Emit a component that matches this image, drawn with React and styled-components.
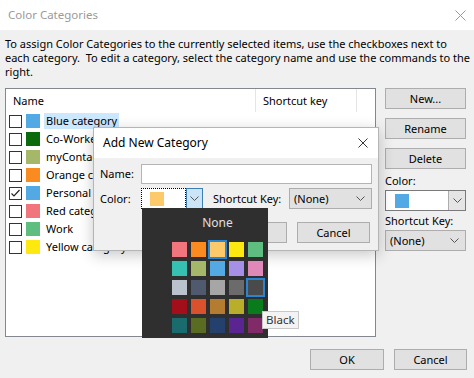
import React from 'react';
import styled, { createGlobalStyle } from 'styled-components';

const GlobalStyle = createGlobalStyle`
	body {
		margin: 0;
		font-family: 'Noto Sans', 'Liberation Sans', sans-serif;
		font-size: 11px;
		line-height: 14px;
		color: #000;
	}
`;

const categories = [
	{ name: 'Blue category', color: '#52a9e4', selected: true },
	{ name: 'Co-Worker', color: '#0b6a0b' },
	{ name: 'myContacts', color: '#a5b86a' },
	{ name: 'Orange category', color: '#f98b20' },
	{ name: 'Personal', color: '#52a9e4', checked: true },
	{ name: 'Red category', color: '#f0757d' },
	{ name: 'Work', color: '#5dbe7f' },
	{ name: 'Yellow category', color: '#fde910' },
];

const palette = [
	['#f0757d', '#f98b20', '#fcc96b', '#fde910', '#5dbe7f'],
	['#35c0b1', '#a5b86a', '#52a9e4', '#a68fe6', '#e088b7'],
	['#bac3cd', '#505a6f', '#a6a6a6', '#6b6b6b', '#4a4a4a'],
	['#a20f1b', '#d9522b', '#b47c30', '#b9ae2a', '#0a7b1c'],
	['#1a6b6e', '#5a6b22', '#24416e', '#5b2591', '#802b67'],
];

const Chevron = () => (
	<svg width='9' height='5' viewBox='0 0 9 5'>
		<polyline points='0.5,0.5 4.5,4.5 8.5,0.5' fill='none' stroke='#555' strokeWidth='1' />
	</svg>
);

const CloseIcon = ({ size = 11, color = '#999' }) => (
	<svg width={size} height={size} viewBox='0 0 11 11'>
		<path d='M0.5 0.5 L10.5 10.5 M10.5 0.5 L0.5 10.5' stroke={color} strokeWidth='1' />
	</svg>
);

const App = () => {
	return (
		<>
			<GlobalStyle />
			<Window>
				<TitleBar>
					<span>Color Categories</span>
					<CloseIcon />
				</TitleBar>
				<Intro>
					To assign Color Categories to the currently selected items, use the checkboxes next to
					<br />
					each category.&nbsp; To edit a category, select the category name and use the commands to the
					<br />
					right.
				</Intro>
				<Main>
					<ListBox>
						<ListHeader>
							<HeaderCell>Name</HeaderCell>
							<HeaderCell>Shortcut key</HeaderCell>
							<HeaderCell />
						</ListHeader>
						{categories.map((cat, idx) => (
							<Row key={idx}>
								<CheckBox>
									{cat.checked && (
										<svg width='11' height='11' viewBox='0 0 11 11'>
											<polyline points='1.5,5.5 4,8 9.5,2' fill='none' stroke='#222' strokeWidth='1.2' />
										</svg>
									)}
								</CheckBox>
								<Swatch $color={cat.color} />
								<RowLabel $selected={cat.selected}>{cat.name}</RowLabel>
							</Row>
						))}
					</ListBox>
					<Side>
						<Button>New...</Button>
						<Button>Rename</Button>
						<Button>Delete</Button>
						<SideLabel>Color:</SideLabel>
						<ColorSelect>
							<ColorField>
								<Swatch $color='#52a9e4' />
							</ColorField>
							<ArrowPart>
								<Chevron />
							</ArrowPart>
						</ColorSelect>
						<SideLabel>Shortcut Key:</SideLabel>
						<DropButton>
							<span>(None)</span>
							<Chevron />
						</DropButton>
					</Side>
				</Main>
				<Footer>
					<Button $w={74}>OK</Button>
					<Button $w={73}>Cancel</Button>
				</Footer>

				{/* --- add new category dialog --- */}
				<SubDialog>
					<SubTitle>
						<span>Add New Category</span>
						<CloseIcon size={10} color='#222' />
					</SubTitle>
					<SubBody>
						<FormRow>
							<FieldLabel>Name:</FieldLabel>
							<TextInput />
						</FormRow>
						<FormRow>
							<FieldLabel>Color:</FieldLabel>
							<ColorPicker>
								<FocusField>
									<Swatch $color='#fcc96b' />
								</FocusField>
								<ActiveArrow>
									<Chevron />
								</ActiveArrow>
								<Popup>
									<NoneLabel>None</NoneLabel>
									<Grid>
										{palette.flat().map((c, idx) => (
											<Cell key={idx} $color={c} $active={idx === 2 || idx === 14} />
										))}
									</Grid>
									<Tooltip>Black</Tooltip>
								</Popup>
							</ColorPicker>
							<KeyLabel>Shortcut Key:</KeyLabel>
							<DropButton $w={83}>
								<span>(None)</span>
								<Chevron />
							</DropButton>
						</FormRow>
						<ButtonRow>
							<Button $w={73}>OK</Button>
							<Button $w={73}>Cancel</Button>
						</ButtonRow>
					</SubBody>
				</SubDialog>
			</Window>
		</>
	);
};

const Window = styled.div`
	position: relative;
	width: 474px;
	height: 378px;
	background: #f0f0f0;
	overflow: hidden;
`;

const TitleBar = styled.div`
	height: 30px;
	background: #fff;
	display: flex;
	align-items: center;
	justify-content: space-between;
	padding: 0 8px 0 8px;
	color: #9a9a9a;
	font-size: 11.5px;
	box-sizing: border-box;
`;

const Intro = styled.div`
	padding: 7px 5px 0;
	line-height: 14px;
	white-space: nowrap;
`;

const Main = styled.div`
	display: flex;
	gap: 9px;
	padding: 0 7px 0 5px;
	margin-top: 9px;
`;

const ListBox = styled.div`
	width: 371px;
	height: 249px;
	box-sizing: border-box;
	border: 1px solid #828790;
	background: #fff;
`;

const ListHeader = styled.div`
	display: grid;
	grid-template-columns: 250px 101px 1fr;
	height: 23px;
`;

const HeaderCell = styled.div`
	display: flex;
	align-items: center;
	padding-left: 7px;
	border-right: 1px solid #e5e5e5;
	&:last-child {
		border-right: none;
	}
`;

const Row = styled.div`
	display: flex;
	align-items: center;
	height: 18px;
	padding-left: 3px;
`;

const CheckBox = styled.div`
	width: 13px;
	height: 13px;
	box-sizing: border-box;
	border: 1px solid #333;
	background: #fff;
	display: flex;
	align-items: center;
	justify-content: center;
	margin-right: 4px;
`;

const Swatch = styled.div`
	width: 14px;
	height: 14px;
	background: ${p => p.$color};
`;

const RowLabel = styled.div`
	margin-left: 4px;
	padding: 0 2px;
	line-height: 16px;
	white-space: nowrap;
	background: ${p => (p.$selected ? '#cce8ff' : 'transparent')};
`;

const Side = styled.div`
	width: 81px;
	display: flex;
	flex-direction: column;
`;

const Button = styled.div`
	width: ${p => (p.$w ? `${p.$w}px` : '100%')};
	height: 21px;
	box-sizing: border-box;
	border: 1px solid #adadad;
	background: #e1e1e1;
	display: flex;
	align-items: center;
	justify-content: center;
	${Side} > & {
		margin-bottom: 9px;
	}
	${Side} > &:nth-of-type(3) {
		margin-bottom: 4px;
	}
`;

const SideLabel = styled.div`
	line-height: 16px;
	margin-bottom: 1px;
	& + div + & {
		margin-top: 2px;
	}
`;

const ColorSelect = styled.div`
	display: flex;
	height: 21px;
	box-sizing: border-box;
	border: 1px solid #7a7a7a;
	background: #fff;
`;

const ColorField = styled.div`
	flex: 1;
	display: flex;
	align-items: center;
	padding-left: 9px;
`;

const ArrowPart = styled.div`
	width: 16px;
	display: flex;
	align-items: center;
	justify-content: center;
	background: #e5e5e5;
	border-left: 1px solid #adadad;
`;

const DropButton = styled.div`
	width: ${p => (p.$w ? `${p.$w}px` : '100%')};
	height: 21px;
	box-sizing: border-box;
	border: 1px solid #adadad;
	background: #e1e1e1;
	display: flex;
	align-items: center;
	justify-content: space-between;
	padding: 0 6px 0 4px;
`;

const Footer = styled.div`
	display: flex;
	justify-content: flex-end;
	gap: 10px;
	padding-right: 7px;
	margin-top: 12px;
`;

const SubDialog = styled.div`
	position: absolute;
	left: 93px;
	top: 127px;
	width: 286px;
	height: 124px;
	box-sizing: border-box;
	border: 1px solid #b5b5b5;
	background: #f0f0f0;
	box-shadow: 0 4px 14px rgba(0, 0, 0, 0.22);
`;

const SubTitle = styled.div`
	height: 30px;
	background: #fff;
	display: flex;
	align-items: center;
	justify-content: space-between;
	padding: 0 10px 0 9px;
	font-size: 12px;
`;

const SubBody = styled.div`
	padding: 6px 6px 0 6px;
`;

const FormRow = styled.div`
	display: flex;
	align-items: center;
	height: 20px;
	& + & {
		margin-top: 4px;
		height: 21px;
	}
`;

const FieldLabel = styled.div`
	width: 41px;
`;

const TextInput = styled.div`
	width: 231px;
	height: 20px;
	box-sizing: border-box;
	border: 1px solid #b4b4b4;
	background: #fff;
`;

const ColorPicker = styled.div`
	position: relative;
	display: flex;
	height: 21px;
`;

const FocusField = styled.div`
	width: 45px;
	box-sizing: border-box;
	border: 1px dotted #000;
	background: #fff;
	display: flex;
	align-items: center;
	padding-left: 8px;
`;

const ActiveArrow = styled.div`
	width: 17px;
	box-sizing: border-box;
	border: 1px solid #3c7fb1;
	background: #cce4f7;
	display: flex;
	align-items: center;
	justify-content: center;
`;

const KeyLabel = styled.div`
	margin: 0 0 0 10px;
	width: 76px;
	white-space: nowrap;
`;

const Popup = styled.div`
	position: absolute;
	left: 1px;
	top: 20px;
	width: 126px;
	height: 130px;
	box-sizing: border-box;
	background: #2f2f2f;
	padding: 8px 5px 0 30px;
	z-index: 2;
`;

const NoneLabel = styled.div`
	text-align: center;
	color: #e0e0e0;
	line-height: 14px;
	font-size: 12px;
`;

const Grid = styled.div`
	display: grid;
	grid-template-columns: repeat(5, 15px);
	grid-auto-rows: 15px;
	gap: 4px;
	margin-top: 12px;
`;

const Cell = styled.div`
	background: ${p => p.$color};
	outline: ${p => (p.$active ? '2px solid #2a84d2' : 'none')};
`;

const Tooltip = styled.div`
	position: absolute;
	left: 120px;
	top: 103px;
	height: 18px;
	box-sizing: border-box;
	padding: 0 3px;
	border: 1px solid #c8c8c8;
	background: #f3f3f3;
	color: #333;
	font-size: 11.5px;
	line-height: 16px;
	white-space: nowrap;
`;

const ButtonRow = styled.div`
	display: flex;
	justify-content: flex-end;
	gap: 10px;
	margin-top: 13px;
	padding-right: 2px;
`;

export default App;
